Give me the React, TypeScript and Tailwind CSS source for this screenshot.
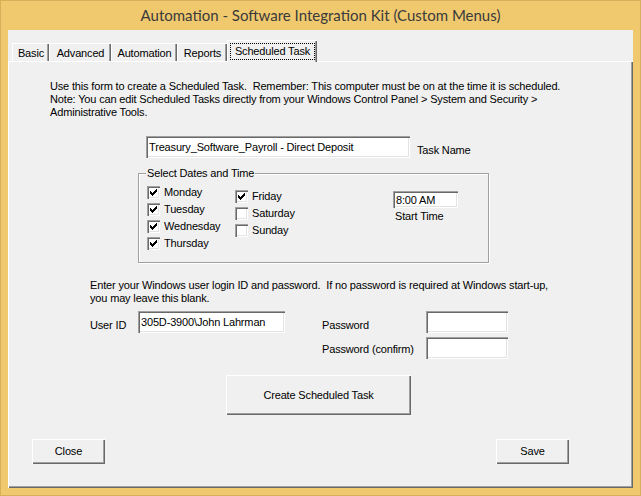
const sunken =
  "bg-white shadow-[inset_1px_1px_#a0a0a0,inset_2px_2px_#696969,inset_-1px_-1px_#ffffff,inset_-2px_-2px_#e3e3e3]";
const raised =
  "bg-[#f0f0f0] shadow-[inset_1px_1px_#ffffff,inset_-1px_-1px_#696969,inset_-2px_-2px_#a0a0a0]";

// classic 7x7 check mark
const CHECK = ["......#", ".....##", "#...###", "##.###.", "#####..", ".###...", "..#...."];

function Checkbox({ label, checked }: { label: string; checked: boolean }) {
  return (
    <div className="flex h-[17px] items-center">
      <span className={`relative h-[13px] w-[13px] shrink-0 ${sunken}`}>
        {checked && (
          <svg className="absolute left-[3px] top-[3px]" width="7" height="7" viewBox="0 0 7 7" shapeRendering="crispEdges">
            {CHECK.flatMap((row, y) =>
              row.split("").map((c, x) => (c === "#" ? <rect key={`${x}-${y}`} x={x} y={y} width="1" height="1" fill="#000" /> : null)),
            )}
          </svg>
        )}
      </span>
      <span className="ml-[4px]">{label}</span>
    </div>
  );
}

function TextBox({ value, className }: { value?: string; className: string }) {
  return (
    <div className={`${sunken} ${className} flex items-center px-[3px] pt-[1px]`}>
      {value && <span className="whitespace-nowrap">{value}</span>}
    </div>
  );
}

function Tab({ label, width, selected }: { label: string; width: string; selected?: boolean }) {
  if (selected) {
    return (
      <div
        className={`relative z-10 -mb-px flex h-[22px] ${width} items-stretch border-l border-t border-white bg-[#f0f0f0] p-[2px] shadow-[inset_-1px_0_#696969,inset_-2px_0_#a0a0a0]`}
      >
        <div className="flex flex-1 items-center justify-center border border-dotted border-black pb-[1px]">{label}</div>
      </div>
    );
  }
  return (
    <div
      className={`flex h-[18px] ${width} items-center justify-center border-l border-t border-white bg-[#f0f0f0] pt-[1px] shadow-[inset_-1px_0_#696969,inset_-2px_0_#a0a0a0]`}
    >
      {label}
    </div>
  );
}

export default function App() {
  return (
    <div className="flex h-[496px] w-[641px] flex-col border border-[#d7b05c] bg-[#f0c96e] font-['Liberation_Sans',Arial,sans-serif] text-[11px] leading-[13px] tracking-[-0.16px] text-black">
      <div className="flex h-[29px] items-center justify-center pb-[1px] font-['Lato',sans-serif] text-[15px] tracking-normal text-[#3a3a3a]">
        Automation - Software Integration Kit (Custom Menus)
      </div>

      <div className="mx-[7px] mb-[7px] flex flex-1 flex-col bg-[#f0f0f0]">
        {/* tab strip */}
        <div className="flex h-[31px] items-end pl-[4px]">
          <Tab label="Basic" width="w-[37px]" />
          <Tab label="Advanced" width="w-[62px]" />
          <Tab label="Automation" width="w-[66px]" />
          <Tab label="Reports" width="w-[50px]" />
          <Tab label="Scheduled Task" width="w-[90px]" selected />
        </div>

        {/* tab page */}
        <div className="flex flex-1 flex-col border-l border-t border-white shadow-[inset_-1px_-1px_#696969,inset_-2px_-2px_#a0a0a0]">
          <p className="ml-[41px] mt-[18px]">
            Use this form to create a Scheduled Task.&nbsp; Remember: This computer must be on at the time it is scheduled.
            <br />
            Note: You can edit Scheduled Tasks directly from your Windows Control Panel &gt; System and Security &gt;
            <br />
            Administrative Tools.
          </p>

          <div className="ml-[137px] mt-[17px] flex">
            <TextBox value="Treasury_Software_Payroll - Direct Deposit" className="h-[22px] w-[264px]" />
            <span className="ml-[7px] pt-[8px]">Task Name</span>
          </div>

          <div className="relative ml-[129px] mt-[15px] flex h-[90px] w-[351px] items-start border border-[#a0a0a0] shadow-[1px_1px_0_#ffffff,inset_1px_1px_0_#ffffff]">
            <span className="absolute -top-[7px] left-[7px] bg-[#f0f0f0] px-[1px]">Select Dates and Time</span>
            <div className="ml-[8px] mt-[10px] flex w-[88px] flex-col">
              <Checkbox label="Monday" checked />
              <Checkbox label="Tuesday" checked />
              <Checkbox label="Wednesday" checked />
              <Checkbox label="Thursday" checked />
            </div>
            <div className="mt-[14px] flex w-[158px] flex-col">
              <Checkbox label="Friday" checked />
              <Checkbox label="Saturday" checked={false} />
              <Checkbox label="Sunday" checked={false} />
            </div>
            <div className="mt-[17px] flex flex-col">
              <TextBox value="8:00 AM" className="h-[17px] w-[65px]" />
              <span className="ml-[2px] mt-[2px]">Start Time</span>
            </div>
          </div>

          <p className="ml-[81px] mt-[16px]">
            Enter your Windows user login ID and password.&nbsp; If no password is required at Windows start-up,
            <br />
            you may leave this blank.
          </p>

          <div className="ml-[81px] mt-[6px] flex items-start">
            <span className="w-[48px] pt-[8px]">User ID</span>
            <TextBox value="305D-3900\John Lahrman" className="h-[22px] w-[147px]" />
            <div className="ml-[37px] flex w-[104px] flex-col pt-[8px]">
              <span>Password</span>
              <span className="mt-[11px]">Password (confirm)</span>
            </div>
            <div className="flex flex-col gap-[4px]">
              <TextBox className="h-[22px] w-[82px]" />
              <TextBox className="h-[22px] w-[82px]" />
            </div>
          </div>

          <button className={`ml-[217px] mt-[16px] flex h-[40px] w-[185px] items-center justify-center ${raised}`}>
            Create Scheduled Task
          </button>

          <div className="mt-[24px] flex">
            <button className={`ml-[23px] flex h-[25px] w-[73px] items-center justify-center ${raised}`}>Close</button>
            <button className={`ml-[391px] flex h-[25px] w-[73px] items-center justify-center ${raised}`}>Save</button>
          </div>
        </div>
      </div>
    </div>
  );
}
